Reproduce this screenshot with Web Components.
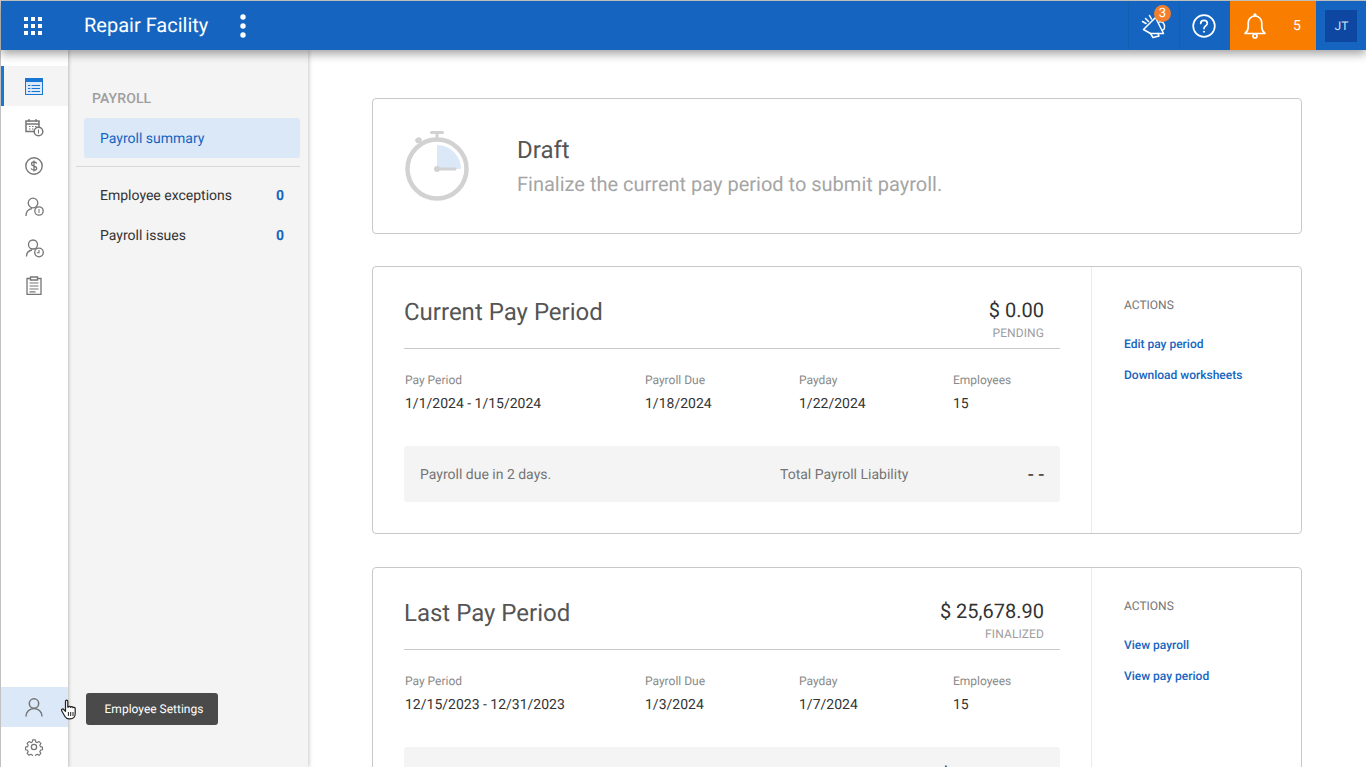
<!DOCTYPE html>
<html lang="en"><head><meta charset="utf-8"><title>Repair Facility</title>
<style>
html,body{margin:0;height:100%;overflow:hidden;background:#fff}
body{font-family:Roboto,"Liberation Sans",sans-serif;color:#333;text-rendering:geometricPrecision}
</style></head><body>
<app-shell>
  <top-bar slot="top"></top-bar>
  <icon-rail slot="rail"></icon-rail>
  <sub-nav slot="nav"></sub-nav>
  <status-card></status-card>
  <period-card title="Current Pay Period" amount="$ 0.00" state="PENDING" range="1/1/2024 - 1/15/2024" due="1/18/2024" payday="1/22/2024" employees="15" a1="Edit pay period" a2="Download worksheets" note="Payroll due in 2 days." total="- -"></period-card>
  <period-card title="Last Pay Period" amount="$ 25,678.90" state="FINALIZED" range="12/15/2023 - 12/31/2023" due="1/3/2024" payday="1/7/2024" employees="15" a1="View payroll" a2="View pay period" note="" total="$ 25,678.90"></period-card>
</app-shell>
<script>
function tpl(html){const t=document.createElement('template');t.innerHTML=html;return t}
function def(name,html,init){
  const t=tpl(html);
  customElements.define(name,class extends HTMLElement{
    connectedCallback(){
      if(this.shadowRoot)return;
      const r=this.attachShadow({mode:'open'});
      r.appendChild(t.content.cloneNode(true));
      if(init)init(this,r);
    }
  });
}
def('app-shell',`<style>
:host{display:flex;flex-direction:column;height:767px;box-sizing:border-box;padding:1px 0 0 1px;background:#c9c9c9;overflow:hidden;position:relative}
.top{position:relative;z-index:3;flex:none}
.body{flex:1;display:flex;min-height:0;background:#fff}
main{flex:1;min-width:0;overflow:hidden;padding:48px 64px 0 64px;display:flex;flex-direction:column;gap:32px}
</style>
<div class="top"><slot name="top"></slot></div>
<div class="body"><slot name="rail"></slot><slot name="nav"></slot><main><slot></slot></main></div>`);

def('top-bar',`<style>
:host{display:flex;height:49px;background:#1565c0;color:#fff;align-items:stretch;box-shadow:0 4px 9px rgba(0,0,0,.36)}
.grid{width:64px;display:flex;align-items:center;justify-content:center;margin-right:19px}
.title{font-size:20px;line-height:49px}
.more{margin-left:29px;width:12px;display:flex;align-items:center;justify-content:center}
.sp{flex:1}
.cell{display:flex;align-items:center;justify-content:center;position:relative}
.mega{width:50px;border-left:1px solid #1060b4}
.help{width:51px;border-left:1px solid #1060b4;box-sizing:border-box;padding-right:2px}
.badge{position:absolute;top:4px;left:25px;width:17px;height:17px;border-radius:50%;background:#f37f2c;font-size:13px;line-height:17px;text-align:center}
.bell{width:86px;background:#f97e00;display:flex;align-items:center;font-size:14px}
.bell svg{margin-left:13px}.bell span{margin-left:26px}
.user{width:50px;display:flex;align-items:center;justify-content:center}
.av{width:32px;height:32px;background:#0d47a1;color:#d6e2f3;font-size:12px;line-height:32px;text-align:center;box-sizing:border-box;padding-left:1px}
</style>
<div class="grid"><svg width="18" height="18" viewBox="0 0 18 18" fill="#fff"><rect x="0" y="0" width="4" height="4"/><rect x="7" y="0" width="4" height="4"/><rect x="14" y="0" width="4" height="4"/><rect x="0" y="7" width="4" height="4"/><rect x="7" y="7" width="4" height="4"/><rect x="14" y="7" width="4" height="4"/><rect x="0" y="14" width="4" height="4"/><rect x="7" y="14" width="4" height="4"/><rect x="14" y="14" width="4" height="4"/></svg></div>
<div class="title">Repair Facility</div>
<div class="more"><svg width="6" height="24" viewBox="0 0 6 24" fill="#fff"><circle cx="3" cy="3" r="2.7"/><circle cx="3" cy="12" r="2.7"/><circle cx="3" cy="21" r="2.7"/></svg></div>
<div class="sp"></div>
<div class="cell mega"><svg width="28" height="28" viewBox="9.5 11.5 28 28" fill="none" stroke="#fff" stroke-width="1.500" stroke-linejoin="round" stroke-linecap="round"><path d="M13 29 25 17l8 16H20z"/><path d="M29 21.500c3-1 5.500 2 5 5.500-.3 2-1.500 2.500-2 2.500"/><path d="M20 33l2.500 4 6-1.500-1-2.500"/><path d="M12 21l3.500 2M15 18l3 3M19 15l2 3.500"/></svg><span class="badge">3</span></div>
<div class="cell help"><svg width="24" height="24" viewBox="0 0 24 24" fill="none" stroke="#fff" stroke-width="1.700"><circle cx="12" cy="12" r="10.800"/><path d="M8.700 9.500c0-2 1.500-3.200 3.300-3.200s3.300 1.200 3.300 3c0 2.600-3.300 2.600-3.300 5.200" stroke-linecap="round"/><circle cx="12" cy="17.700" r=".6" fill="#fff" stroke-width="1"/></svg></div>
<div class="bell"><svg width="24" height="26" viewBox="0 0 24 26" fill="none" stroke="#fff" stroke-width="1.700" stroke-linejoin="round"><path d="M2 20.500c2-1.500 3.200-3 3.200-6.500V10c0-4 3-7 6.800-7s6.800 3 6.800 7v4c0 3.500 1.200 5 3.200 6.500z"/><circle cx="12" cy="1.800" r=".8"/><circle cx="12" cy="23" r="2"/></svg><span>5</span></div>
<div class="user"><div class="av">JT</div></div>`);

const I='fill="none" stroke="#757575" stroke-width="1.500"';
const ic={
 table:`<svg width="18" height="17" viewBox="0 0 18 17"><rect width="18" height="17" fill="#1976d2"/><rect x="1" y="4" width="16" height="12" fill="#dbe9f9"/><path d="M3 7.500h12M3 10.500h12M3 13.500h12" stroke="#1976d2" stroke-width="1.200"/><path d="M6 6.500v8.500" stroke="#dbe9f9" stroke-width="1.200"/></svg>`,
 cal:`<svg width="19" height="19" viewBox="0 0 19 19" ${I} stroke-width="1.200"><path d="M9 13.500H1V3h13v6"/><path d="M1 6h13M4 1v3M11 1v3" stroke-width="1.300"/><path d="M4 8.500h1.500M7 8.500h1.500M10 8.500h1.500M4 11h1.500M7 11h1.500" stroke-width="1.200"/><circle cx="13.500" cy="13.500" r="4.300"/><path d="M13.500 11.500v4" stroke-width="1"/></svg>`,
 dollar:`<svg width="18" height="18" viewBox="0 0 18 18" fill="none" stroke="#757575" stroke-width="1.400"><circle cx="9" cy="9" r="8.200"/><path d="M11.700 6.500C11.300 5.300 10.300 5 9 5 7.500 5 6.500 5.800 6.500 7c0 2.800 5.200 1.400 5.200 4.200 0 1.200-1.100 1.900-2.700 1.900-1.400 0-2.400-.5-2.800-1.700M9 3.600v10.800" stroke-width="1.300"/></svg>`,
 pd:`<svg width="19" height="20" viewBox="0 0 19 20" fill="none" stroke="#757575" stroke-width="1.300"><circle cx="8" cy="6" r="4.800"/><path d="M1 19c0-4 2.500-6.800 6-7.300"/><circle cx="14" cy="14" r="4.200"/><path d="M14 12v4" stroke-width="1"/></svg>`,
 pc:`<svg width="19" height="19" viewBox="0 0 19 19" fill="none" stroke="#757575" stroke-width="1.300"><circle cx="8" cy="5.500" r="4.500"/><path d="M1.500 17.500c0-3.500 2.500-6 5.500-6.500"/><circle cx="14" cy="13.500" r="4.300"/><path d="M14 11v2.800h-2.200" stroke-width="1.100"/></svg>`,
 clip:`<svg width="16" height="19" viewBox="0 0 16 19" fill="none" stroke="#757575" stroke-width="1.300"><path d="M4.500 2.500H1v15.800h14V2.500h-3.500"/><path d="M4.500 1h7v3h-7z"/><path d="M3.500 7h9M3.500 10h9M3.500 13h9M3.500 15.800h6" stroke-width="1.200"/></svg>`,
 user:`<svg width="18" height="19" viewBox="0 0 18 19" fill="none" stroke="#757575" stroke-width="1.500"><circle cx="9" cy="5.500" r="4.700"/><path d="M1 18.500c0-4.500 3.500-8 8-8s8 3.500 8 8"/></svg>`,
 gear:`<svg width="18" height="18" viewBox="0 0 24 24" fill="none" stroke="#757575" stroke-width="1.700" stroke-linejoin="round"><circle cx="12" cy="12" r="3.500"/><path d="M10 1.500h4l.6 3 2.200 1 2.600-1.600 2.800 2.800-1.600 2.600 1 2.200 3 .6v4l-3 .6-1 2.200 1.600 2.600-2.800 2.800-2.600-1.600-2.200 1-.6 3h-4l-.6-3-2.200-1-2.600 1.600-2.800-2.800 1.600-2.600-1-2.200-3-.6v-4l3-.6 1-2.200-1.600-2.600L4.600 3.900l2.600 1.600 2.200-1z" transform="translate(1.200 1.200) scale(.9)"/></svg>`
};
def('icon-rail',`<style>
:host{display:flex;flex-direction:column;width:67px;flex:none;background:#fff;position:relative;z-index:2;box-shadow:1px 0 3px rgba(0,0,0,.22);padding-top:16px;box-sizing:border-box}
.i{height:40px;display:flex;align-items:center;justify-content:center;box-sizing:border-box;padding-right:1px}
.on{background:#f4f4f4;border-left:3px solid #1976d2;padding-right:4px}
#b,#d{padding-top:2px}
#e{padding-top:4px}
#f{padding-bottom:2px}
.sp{flex:1}
.hov{background:#dbe8f8}
.tip{position:absolute;left:85px;top:643px;width:132px;height:32px;border-radius:3px;background:#4a4a4a;color:#fff;font-size:12px;line-height:33px;text-align:center;box-sizing:border-box;padding-left:4px;white-space:nowrap}
.hand{position:absolute;left:60px;top:649px}
</style>
<div class="i on" id="a"></div><div class="i" id="b"></div><div class="i" id="c"></div><div class="i" id="d"></div><div class="i" id="e"></div><div class="i" id="f"></div>
<div class="sp"></div>
<div class="i hov" id="g"></div><div class="i" id="h"></div>
<svg class="hand" width="18" height="21" viewBox="0 0 18 21"><path d="M4.500 2.200c0-1.500 2.300-1.500 2.300 0v6l.6-.1c.1-1 2.100-1 2.300.2.300-.9 2.100-.8 2.300.4.500-.6 2.100-.4 2.200.9v5c0 2.800-1.800 5.300-5 5.300H8c-2.200 0-3.200-1-4.200-2.700L.8 12c-.9-1.400.8-2.700 1.900-1.500l1.800 1.900z" fill="#fff" stroke="#222" stroke-width="1.200" stroke-linejoin="round"/><path d="M7.400 13v4M9.700 13v4M12 13v4" stroke="#222" stroke-width="1"/></svg>
<div class="tip">Employee Settings</div>`,(h,r)=>{
  const m={a:'table',b:'cal',c:'dollar',d:'pd',e:'pc',f:'clip',g:'user',h:'gear'};
  for(const k in m) r.getElementById(k).innerHTML=ic[m[k]];
});

def('sub-nav',`<style>
:host{display:block;width:240px;flex:none;background:#f4f4f4;box-sizing:border-box;padding:40px 8px 0 16px;box-shadow:1px 0 4px rgba(0,0,0,.22);position:relative;z-index:1;font-size:14px}
h3{margin:0 0 11px 8px;padding-top:1px;font:500 14px/16px Roboto,sans-serif;color:#9e9e9e;letter-spacing:.1px}
.act{height:40px;line-height:42px;border-radius:3px;background:#dbe8f8;color:#1565c0;padding-left:16px}
hr{border:0;border-top:1px solid #d8d8d8;margin:8px 0 8px -8px}
.row{height:40px;box-sizing:border-box;display:flex;justify-content:space-between;align-items:center;padding:2px 16px 0;color:#333}
b{color:#1565c0;font-weight:700;font-size:14px}
</style>
<h3>PAYROLL</h3>
<div class="act">Payroll summary</div>
<hr>
<div class="row"><span>Employee exceptions</span><b>0</b></div>
<div class="row"><span>Payroll issues</span><b>0</b></div>`);

def('status-card',`<style>
:host{display:flex;align-items:center;flex:none;height:136px;box-sizing:border-box;border:1px solid #c8c8c8;border-radius:4px;background:#fff;padding-left:31px}
.t{margin-left:47px}
.h{font-size:24px;line-height:32px;color:#555;margin-top:-2px}
.s{font-size:20px;line-height:26px;color:#a5a5a5;margin-top:5px}
</style>
<svg width="66" height="72" viewBox="0 0 66 72"><path d="M33 36V12a24 24 0 0 1 24 24z" fill="#dbe8f8" transform="translate(0 3)"/><g fill="none" stroke="#d2d2d2" stroke-linecap="round"><circle cx="33" cy="39" r="29.500" stroke-width="4.500"/><path d="M33 39h18" stroke-width="3"/><path d="M33 9V3M27.500 2.500h11" stroke-width="3"/><path d="M15 10l-1 .5" stroke-width="5.500"/></g><circle cx="33" cy="39" r="3" fill="#d2d2d2"/></svg>
<div class="t"><div class="h">Draft</div><div class="s">Finalize the current pay period to submit payroll.</div></div>`);

def('period-card',`<style>
:host{display:flex;flex:none;height:268px;box-sizing:border-box;border:1px solid #c8c8c8;border-radius:4px;background:#fff}
:host(:last-child){margin-top:1px}
.l{flex:1;min-width:0;padding:0 31px;border-right:1px solid #ebebeb}
.r{width:209px;flex:none;box-sizing:border-box;padding:30px 0 0 32px}
.hd{height:82px;box-sizing:border-box;border-bottom:1px solid #c8c8c8;display:flex;justify-content:space-between;padding:0 16px 0 0}
.tt{font-size:24px;line-height:32px;color:#555;margin-top:29px}
.am{text-align:right;margin-top:29px}
.am div:first-child{font-size:20px;line-height:28px;color:#333}
.am div:last-child{font-size:12px;line-height:14px;color:#9e9e9e;margin-top:2px;letter-spacing:.1px}
.g{display:grid;grid-template-columns:240px 154px 154px 1fr;padding:23px 0 0 1px}
.k{font-size:12px;line-height:16px;color:#8a8a8a}
.v{font-size:14px;line-height:20px;color:#333;margin-top:6px}
.bar{margin-top:32px;height:56px;border-radius:3px;background:#f4f4f4;display:flex;align-items:center;padding:0 16px;font-size:14px;color:#757575}
.bar .n{width:360px;padding-top:2px}
.bar .x{flex:1;padding-top:2px}
.bar .m{color:#333;font-size:20px}
h4{margin:0 0 23px;font:400 12px/16px Roboto,sans-serif;color:#757575}
a{display:block;font-size:12px;line-height:16px;color:#1565c0;font-weight:500;margin-bottom:15px;white-space:nowrap}
</style>
<div class="l"><div class="hd"><div class="tt" id="tt"></div><div class="am"><div id="am"></div><div id="st"></div></div></div>
<div class="g"><div class="k">Pay Period</div><div class="k">Payroll Due</div><div class="k">Payday</div><div class="k">Employees</div>
<div class="v" id="range"></div><div class="v" id="due"></div><div class="v" id="pd"></div><div class="v" id="em"></div></div>
<div class="bar"><span class="n" id="note"></span><span class="x">Total Payroll Liability</span><span class="m" id="tot"></span></div></div>
<div class="r"><h4>ACTIONS</h4><a id="a1"></a><a id="a2"></a></div>`,(h,r)=>{
  const m={tt:'title',am:'amount',st:'state',range:'range',due:'due',pd:'payday',em:'employees',note:'note',tot:'total',a1:'a1',a2:'a2'};
  for(const k in m) r.getElementById(k).textContent=h.getAttribute(m[k]);
  h.removeAttribute('title');
});
</script>
</body></html>
